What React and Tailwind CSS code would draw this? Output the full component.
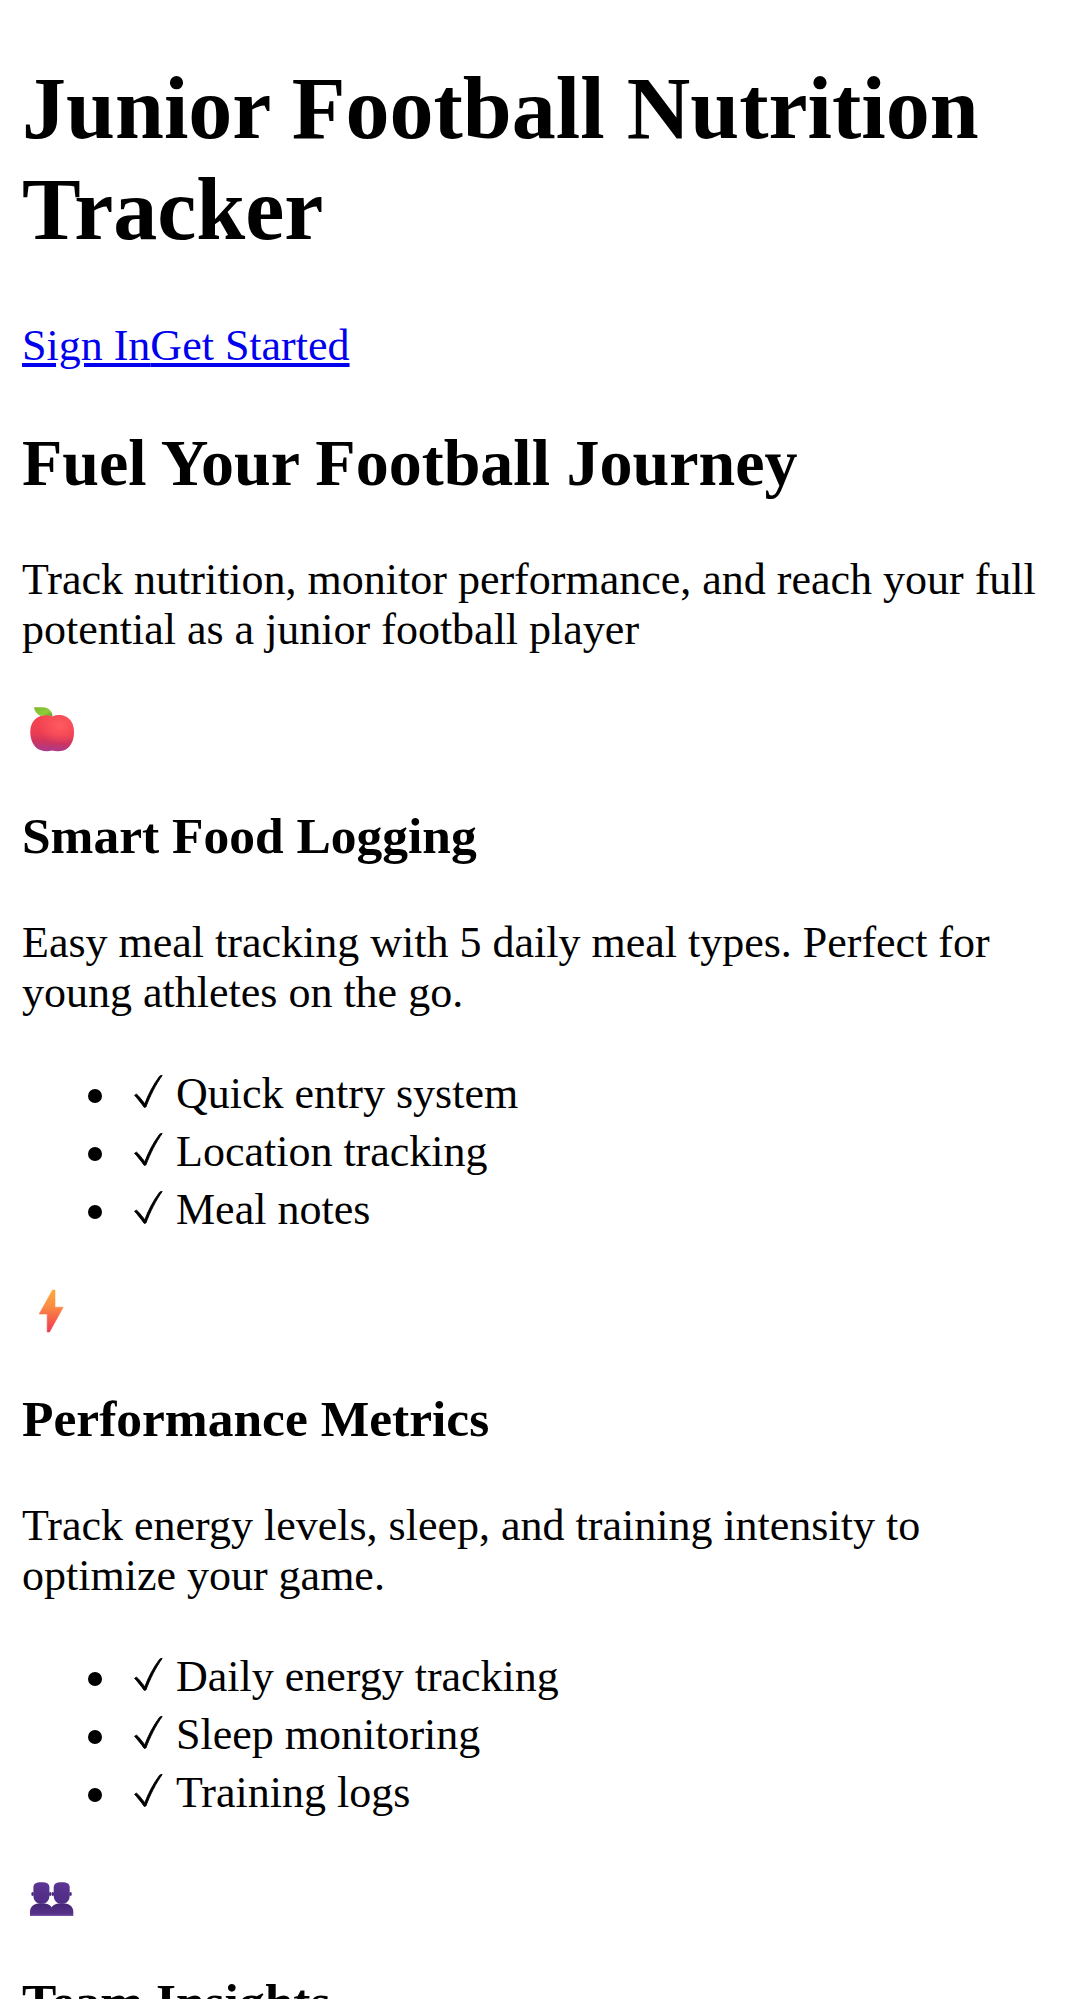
import React from "react";

function Apple() {
  return (
    <svg className="block h-[58px] w-[60px]" viewBox="0 0 60 58">
      <defs>
        <linearGradient id="appleBody" x1="0.5" y1="0" x2="0.42" y2="1">
          <stop offset="0" stopColor="#f5484f" />
          <stop offset="0.5" stopColor="#ee3d52" />
          <stop offset="0.75" stopColor="#cf3560" />
          <stop offset="1" stopColor="#a83a8e" />
        </linearGradient>
        <radialGradient id="appleShine" cx="0.68" cy="0.3" r="0.5">
          <stop offset="0" stopColor="#ff5a60" />
          <stop offset="1" stopColor="#ff5a60" stopOpacity="0" />
        </radialGradient>
        <linearGradient id="leaf" x1="0" y1="0" x2="1" y2="1">
          <stop offset="0" stopColor="#7cb82c" />
          <stop offset="0.6" stopColor="#8fce3a" />
          <stop offset="1" stopColor="#5c9a2c" />
        </linearGradient>
      </defs>
      <path d="M30.5 16.5C27 14.8 22 14.6 18 16.2C11.5 18.8 8.3 24.5 8.3 32C8.3 38.5 10.5 44 14 47.5C18 51.2 24.5 52 30 50.6C36 52 42.5 51.4 46.5 47.5C50 44 52 38.5 52 32C52 24.5 48.8 18.5 43 16.2C39 14.6 34.5 14.7 30.5 16.5Z" fill="url(#appleBody)" />
      <path d="M30.5 16.5C27 14.8 22 14.6 18 16.2C11.5 18.8 8.3 24.5 8.3 32C8.3 38.5 10.5 44 14 47.5C18 51.2 24.5 52 30 50.6C36 52 42.5 51.4 46.5 47.5C50 44 52 38.5 52 32C52 24.5 48.8 18.5 43 16.2C39 14.6 34.5 14.7 30.5 16.5Z" fill="url(#appleShine)" />
      <path d="M12 7.3H21C26.5 7.5 30.3 11 30.6 16.6C27.5 15.2 23 14.8 18.5 16C15 14.5 12.5 11.5 12 7.3Z" fill="url(#leaf)" />
    </svg>
  );
}

function Bolt() {
  return (
    <svg className="block h-[58px] w-[60px]" viewBox="0 0 60 58">
      <defs>
        <linearGradient id="bolt" x1="0.5" y1="0" x2="0.5" y2="1">
          <stop offset="0" stopColor="#fbab3c" />
          <stop offset="0.4" stopColor="#fa8a44" />
          <stop offset="0.7" stopColor="#f5604a" />
          <stop offset="1" stopColor="#ee3a55" />
        </linearGradient>
      </defs>
      <path d="M30.5 7H33V24.2H41.2L27.5 49H25.2V31H17.2Z" fill="url(#bolt)" stroke="url(#bolt)" strokeWidth="0.6" strokeLinejoin="round" />
    </svg>
  );
}

function Person({ dx }) {
  return (
    <g transform={`translate(${dx} 0)`}>
      <path d="M8 50V45.5C8 40.5 12 37.2 19.5 37.2S31 40.5 31 45.5V50Z" fill="url(#shoulders)" />
      <ellipse cx="10.6" cy="28" rx="1.3" ry="2" fill="#4b2a80" />
      <ellipse cx="28.2" cy="28" rx="1.3" ry="2" fill="#4b2a80" />
      <path d="M11.4 21.5C11.4 18 13.5 16.2 19.4 16.2S27.4 18 27.4 21.5V29.5C27.4 34.5 24.5 37.8 19.4 37.8S11.4 34.5 11.4 29.5Z" fill="url(#head)" />
    </g>
  );
}

function People() {
  return (
    <svg className="block h-[58px] w-[60px]" viewBox="0 0 60 58">
      <defs>
        <linearGradient id="head" x1="0.6" y1="0" x2="0.4" y2="1">
          <stop offset="0" stopColor="#5f3796" />
          <stop offset="0.5" stopColor="#54308a" />
          <stop offset="1" stopColor="#4e2c84" />
        </linearGradient>
        <linearGradient id="shoulders" x1="0" y1="0" x2="0" y2="1">
          <stop offset="0" stopColor="#432576" />
          <stop offset="0.85" stopColor="#573189" />
          <stop offset="1" stopColor="#7c5aac" />
        </linearGradient>
      </defs>
      <Person dx={0} />
      <Person dx={20.3} />
    </svg>
  );
}

function Check() {
  return (
    <svg className="mt-[2px] h-[58px] w-[33px] shrink-0" viewBox="0 0 33 58" role="img" aria-label="✓">
      <path
        d="M2.6 29.2L4.6 28.2C5.7 28.8 10 34 12.8 37.8C16 29 21 19 27.6 10.2C28.4 9.6 29.2 9.5 30.2 9.5C24 18 18 30 13.9 41L12.2 41.4C10 38 5 32 2.6 29.2Z"
        fill="#000"
        stroke="#000"
        strokeWidth="0.9"
        strokeLinejoin="round"
      />
    </svg>
  );
}

function Feature({ icon, title, text, items }) {
  return (
    <section>
      <div className="h-[58px]">{icon}</div>
      <h3 className="mt-[48px] mb-[53px] text-[51.48px] leading-[59px] font-bold">{title}</h3>
      {text && <p>{text}</p>}
      {items && (
        <ul className="mt-[47px] mb-[44px] pl-[66px] leading-[58px]">
          {items.map((item) => (
            <li key={item} className="flex h-[58px] items-center">
              <span className="mt-[4px] mr-[30px] size-[14px] shrink-0 rounded-full bg-black" />
              <Check />
              <span className="ml-[11px]">{item}</span>
            </li>
          ))}
        </ul>
      )}
    </section>
  );
}

export default function App() {
  return (
    <div className="flow-root h-[1999px] overflow-hidden bg-white px-[22px] font-['Liberation_Serif',serif] text-[44px] leading-[50px] text-black">
      <header>
        <h1 className="mt-[58px] mb-[61px] text-[88px] leading-[101px] font-bold">Junior Football Nutrition Tracker</h1>
        <nav className="text-[#0000ee]">
          <a href="#signin" className="underline">Sign In</a>
          <a href="#start" className="underline">Get Started</a>
        </nav>
      </header>
      <main>
        <h2 className="mt-[54px] mb-[55px] text-[66px] leading-[75px] font-bold">Fuel Your Football Journey</h2>
        <p className="mb-[45px]">Track nutrition, monitor performance, and reach your full potential as a junior football player</p>
        <Feature
          icon={<Apple />}
          title="Smart Food Logging"
          text="Easy meal tracking with 5 daily meal types. Perfect for young athletes on the go."
          items={["Quick entry system", "Location tracking", "Meal notes"]}
        />
        <Feature
          icon={<Bolt />}
          title="Performance Metrics"
          text="Track energy levels, sleep, and training intensity to optimize your game."
          items={["Daily energy tracking", "Sleep monitoring", "Training logs"]}
        />
        <Feature icon={<People />} title="Team Insights" />
      </main>
    </div>
  );
}
